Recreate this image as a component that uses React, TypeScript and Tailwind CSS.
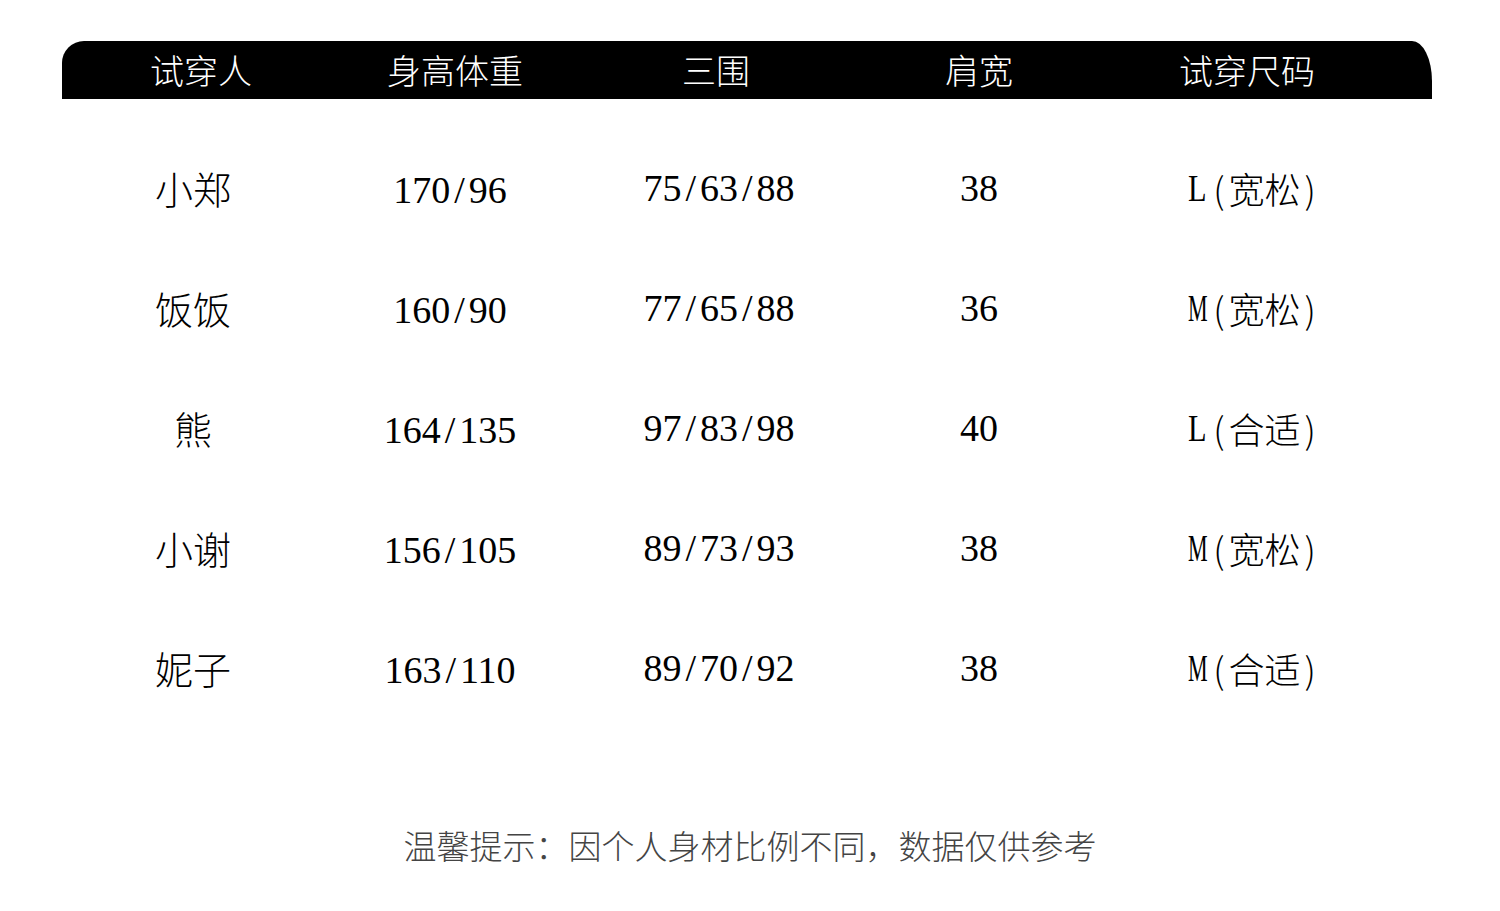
import React from "react";

const cjk = { fontFamily: '"Noto Sans CJK SC", "Noto Sans", sans-serif' };
const serif = { fontFamily: '"Liberation Serif", "Noto Sans CJK SC", serif' };

type Row = { name: string; hw: string; bust: string; sh: string; size: string; fit: string };

const rows: Row[] = [
  { name: "小郑", hw: "170/96", bust: "75/63/88", sh: "38", size: "L", fit: "宽松" },
  { name: "饭饭", hw: "160/90", bust: "77/65/88", sh: "36", size: "M", fit: "宽松" },
  { name: "熊", hw: "164/135", bust: "97/83/98", sh: "40", size: "L", fit: "合适" },
  { name: "小谢", hw: "156/105", bust: "89/73/93", sh: "38", size: "M", fit: "宽松" },
  { name: "妮子", hw: "163/110", bust: "89/70/92", sh: "38", size: "M", fit: "合适" },
];

function Nums({ text }: { text: string }) {
  const parts = text.split("/");
  return (
    <span className="text-[38px] leading-none" style={serif}>
      {parts.map((p, i) => (
        <React.Fragment key={i}>
          {i > 0 && <span className="px-[4px]">/</span>}
          {p}
        </React.Fragment>
      ))}
    </span>
  );
}

function Size({ size, fit }: { size: string; fit: string }) {
  return (
    <span className="inline-flex items-center leading-none">
      {size === "M" ? (
        <span className="inline-block w-[21px]" style={serif}>
          <span className="inline-block origin-left scale-x-[0.58] text-[38px]">M</span>
        </span>
      ) : (
        <span className="inline-block w-[21px] text-[38px] scale-x-[0.8] origin-left" style={serif}>
          L
        </span>
      )}
      <span className="text-[36px] font-light" style={cjk}>
        <span className="px-[4px]">(</span>
        {fit}
        <span className="px-[4px]">)</span>
      </span>
    </span>
  );
}

export default function App() {
  return (
    <div className="w-[1500px] h-[911px] bg-white overflow-hidden">
      <div className="pt-[41px] pl-[62px] pr-[68px]">
        <div
          className="h-[58px] bg-black rounded-tl-[22px] rounded-tr-[20px_40px] grid grid-cols-[278px_230px_292px_234px_302px] items-center text-white text-[34px] font-light leading-none"
          style={cjk}
        >
          <div className="text-center">试穿人</div>
          <div className="text-center">身高体重</div>
          <div className="text-center">三围</div>
          <div className="text-center">肩宽</div>
          <div className="text-center">试穿尺码</div>
        </div>
        <div className="mt-[29px] flex flex-col">
          {rows.map((r) => (
            <div
              key={r.name}
              className="h-[120px] grid grid-cols-[262px_252px_282px_242px_302px] items-center text-black leading-none"
            >
              <div className="text-center text-[38px] font-light" style={cjk}>
                {r.name}
              </div>
              <div className="text-center pt-[4px]">
                <Nums text={r.hw} />
              </div>
              <div className="text-center pl-[4px]">
                <Nums text={r.bust} />
              </div>
              <div className="text-center">
                <Nums text={r.sh} />
              </div>
              <div className="text-center pl-[6px]">
                <Size size={r.size} fit={r.fit} />
              </div>
            </div>
          ))}
        </div>
      </div>
      <div className="mt-[101px] text-center text-[33px] text-[#444] font-light leading-none" style={cjk}>
        温馨提示：因个人身材比例不同，数据仅供参考
      </div>
    </div>
  );
}
